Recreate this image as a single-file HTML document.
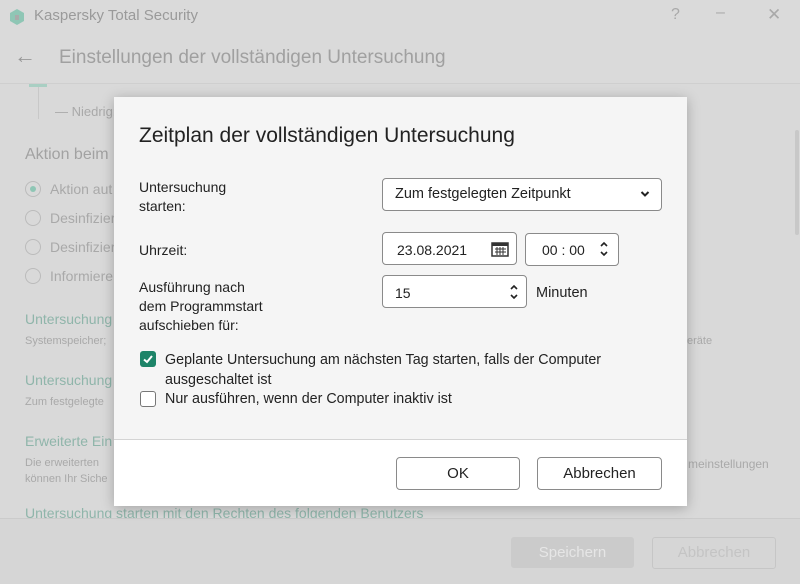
<!DOCTYPE html>
<html><head><meta charset="utf-8"><style>
*{margin:0;padding:0;box-sizing:border-box}
body{width:800px;height:584px;overflow:hidden;background:#d9d9d9;font-family:"Liberation Sans",sans-serif;position:relative;color:#222}
.a{position:absolute;white-space:nowrap}
.g{color:#a9a9a9}
.t{color:#8fb5aa}
.box{position:absolute;background:#fff;border:1px solid #8a8a8a;border-radius:4px}
</style></head><body>
<div class="a" style="left:0;top:0;width:800px;height:84px;background:#dadada;border-bottom:1px solid #cfcfcf"></div>
<svg class="a" style="left:8px;top:8px" width="18" height="18"><path d="M9 1 L16 5 V13 L9 17 L2 13 V5Z" fill="#8fc6b5"/><rect x="7" y="7" width="4" height="5" fill="#aaa"/></svg>
<div class="a g" style="left:34px;top:7px;font-size:15px;color:#9a9a9a">Kaspersky Total Security</div>
<div class="a g" style="left:671px;top:6px;font-size:16px">?</div>
<div class="a g" style="left:716px;top:4px;font-size:16px">–</div>
<div class="a g" style="left:767px;top:5px;font-size:17px">✕</div>
<div class="a g" style="left:14px;top:43px;font-size:22px;color:#999">←</div>
<div class="a" style="left:59px;top:47px;font-size:19px;color:#a0a0a0">Einstellungen der vollständigen Untersuchung</div>
<div class="a" style="left:38px;top:85px;width:1px;height:34px;background:#c8c8c8"></div>
<div class="a" style="left:29px;top:84px;width:18px;height:3px;background:#a9cfc3"></div>
<div class="a g" style="left:55px;top:104px;font-size:13px">— Niedrig:</div>
<div class="a g" style="left:25px;top:146px;font-size:16px;color:#a2a2a2">Aktion beim</div>
<div class="a" style="left:25px;top:181px;width:16px;height:16px;border:1px solid #bbb;border-radius:50%"></div>
<div class="a" style="left:30px;top:186px;width:6px;height:6px;background:#8fc6b5;border-radius:50%"></div>
<div class="a g" style="left:50px;top:181px;font-size:14px">Aktion aut</div>
<div class="a" style="left:25px;top:210px;width:16px;height:16px;border:1px solid #bbb;border-radius:50%"></div>
<div class="a g" style="left:50px;top:210px;font-size:14px">Desinfizier</div>
<div class="a" style="left:25px;top:239px;width:16px;height:16px;border:1px solid #bbb;border-radius:50%"></div>
<div class="a g" style="left:50px;top:239px;font-size:14px">Desinfizier</div>
<div class="a" style="left:25px;top:268px;width:16px;height:16px;border:1px solid #bbb;border-radius:50%"></div>
<div class="a g" style="left:50px;top:268px;font-size:14px">Informiere</div>
<div class="a t" style="left:25px;top:311px;font-size:14px">Untersuchung</div>
<div class="a g" style="left:25px;top:335px;font-size:11px">Systemspeicher;</div>
<div class="a t" style="left:25px;top:372px;font-size:14px">Untersuchung</div>
<div class="a g" style="left:25px;top:396px;font-size:11px">Zum festgelegte</div>
<div class="a t" style="left:25px;top:433px;font-size:14px">Erweiterte Ein</div>
<div class="a g" style="left:25px;top:457px;font-size:11px">Die erweiterten</div>
<div class="a g" style="left:25px;top:473px;font-size:11px">können Ihr Siche</div>
<div class="a g" style="left:687px;top:335px;font-size:11px">eräte</div>
<div class="a g" style="left:688px;top:457px;font-size:12px">meinstellungen</div>
<div class="a t" style="left:25px;top:505px;font-size:14px">Untersuchung starten mit den Rechten des folgenden Benutzers</div>
<div class="a" style="left:0;top:518px;width:800px;height:66px;background:#d6d6d6;border-top:1px solid #cbcbcb"></div>
<div class="a" style="left:511px;top:537px;width:123px;height:31px;background:#cbcbcb;border-radius:3px;color:#e6e6e6;font-size:15px;text-align:center;line-height:31px">Speichern</div>
<div class="a" style="left:652px;top:537px;width:124px;height:32px;border:1px solid #c6c6c6;border-radius:3px;color:#c4c4c4;font-size:15px;text-align:center;line-height:30px">Abbrechen</div>
<div class="a" style="left:795px;top:130px;width:4px;height:105px;background:#c8c8c8;border-radius:2px"></div>

<div class="a" style="left:114px;top:97px;width:573px;height:409px;background:#f5f5f5;box-shadow:0 2px 12px rgba(0,0,0,.25)"></div>
<div class="a" style="left:114px;top:439px;width:573px;height:67px;background:#fff;border-top:1px solid #d4d4d4"></div>
<div class="a" style="left:139px;top:124px;font-size:21px">Zeitplan der vollständigen Untersuchung</div>
<div class="a" style="left:139px;top:178px;font-size:14px;line-height:19px">Untersuchung<br>starten:</div>
<div class="box" style="left:382px;top:178px;width:280px;height:33px"></div>
<div class="a" style="left:395px;top:186px;font-size:14.5px">Zum festgelegten Zeitpunkt</div>
<svg class="a" style="left:640px;top:190px" width="10" height="8"><path d="M1.5 2 L5 5.5 L8.5 2" stroke="#222" stroke-width="2" fill="none"/></svg>
<div class="a" style="left:139px;top:242px;font-size:14px">Uhrzeit:</div>
<div class="box" style="left:382px;top:232px;width:135px;height:33px"></div>
<div class="a" style="left:397px;top:242px;font-size:14px">23.08.2021</div>
<svg class="a" style="left:491px;top:241px" width="18" height="16"><rect x="1" y="2" width="16" height="13" fill="none" stroke="#333" stroke-width="1.5"/><rect x="1" y="2" width="16" height="3" fill="#333"/><path d="M4 8h11M4 11h11M6 6v8M9 6v8M12 6v8" stroke="#333" stroke-width="1"/></svg>
<div class="box" style="left:525px;top:233px;width:94px;height:33px"></div>
<div class="a" style="left:542px;top:242px;font-size:14px">00 : 00</div>
<svg class="a" style="left:599px;top:240px" width="10" height="18"><path d="M2 6 L5 3 L8 6 M2 12 L5 15 L8 12" stroke="#222" stroke-width="1.6" fill="none"/></svg>
<div class="a" style="left:139px;top:278px;font-size:14px;line-height:19px">Ausführung nach<br>dem Programmstart<br>aufschieben für:</div>
<div class="box" style="left:382px;top:275px;width:145px;height:33px"></div>
<div class="a" style="left:395px;top:285px;font-size:14px">15</div>
<svg class="a" style="left:509px;top:283px" width="10" height="18"><path d="M2 6 L5 3 L8 6 M2 12 L5 15 L8 12" stroke="#222" stroke-width="1.6" fill="none"/></svg>
<div class="a" style="left:536px;top:285px;font-size:14.5px">Minuten</div>
<div class="a" style="left:140px;top:351px;width:16px;height:16px;background:#1d8468;border-radius:3px"></div>
<svg class="a" style="left:140px;top:351px" width="16" height="16"><path d="M4 8.5 L7 11 L12 5" stroke="#fff" stroke-width="2" fill="none"/></svg>
<div class="a" style="left:165px;top:350px;font-size:14.3px;line-height:20px">Geplante Untersuchung am nächsten Tag starten, falls der Computer<br>ausgeschaltet ist</div>
<div class="a" style="left:140px;top:391px;width:16px;height:16px;border:1px solid #777;border-radius:3px;background:#fff"></div>
<div class="a" style="left:165px;top:391px;font-size:14.3px">Nur ausführen, wenn der Computer inaktiv ist</div>
<div class="box" style="left:396px;top:457px;width:124px;height:33px;text-align:center;line-height:31px;font-size:15px">OK</div>
<div class="box" style="left:537px;top:457px;width:125px;height:33px;text-align:center;line-height:31px;font-size:15px">Abbrechen</div>
</body></html>
